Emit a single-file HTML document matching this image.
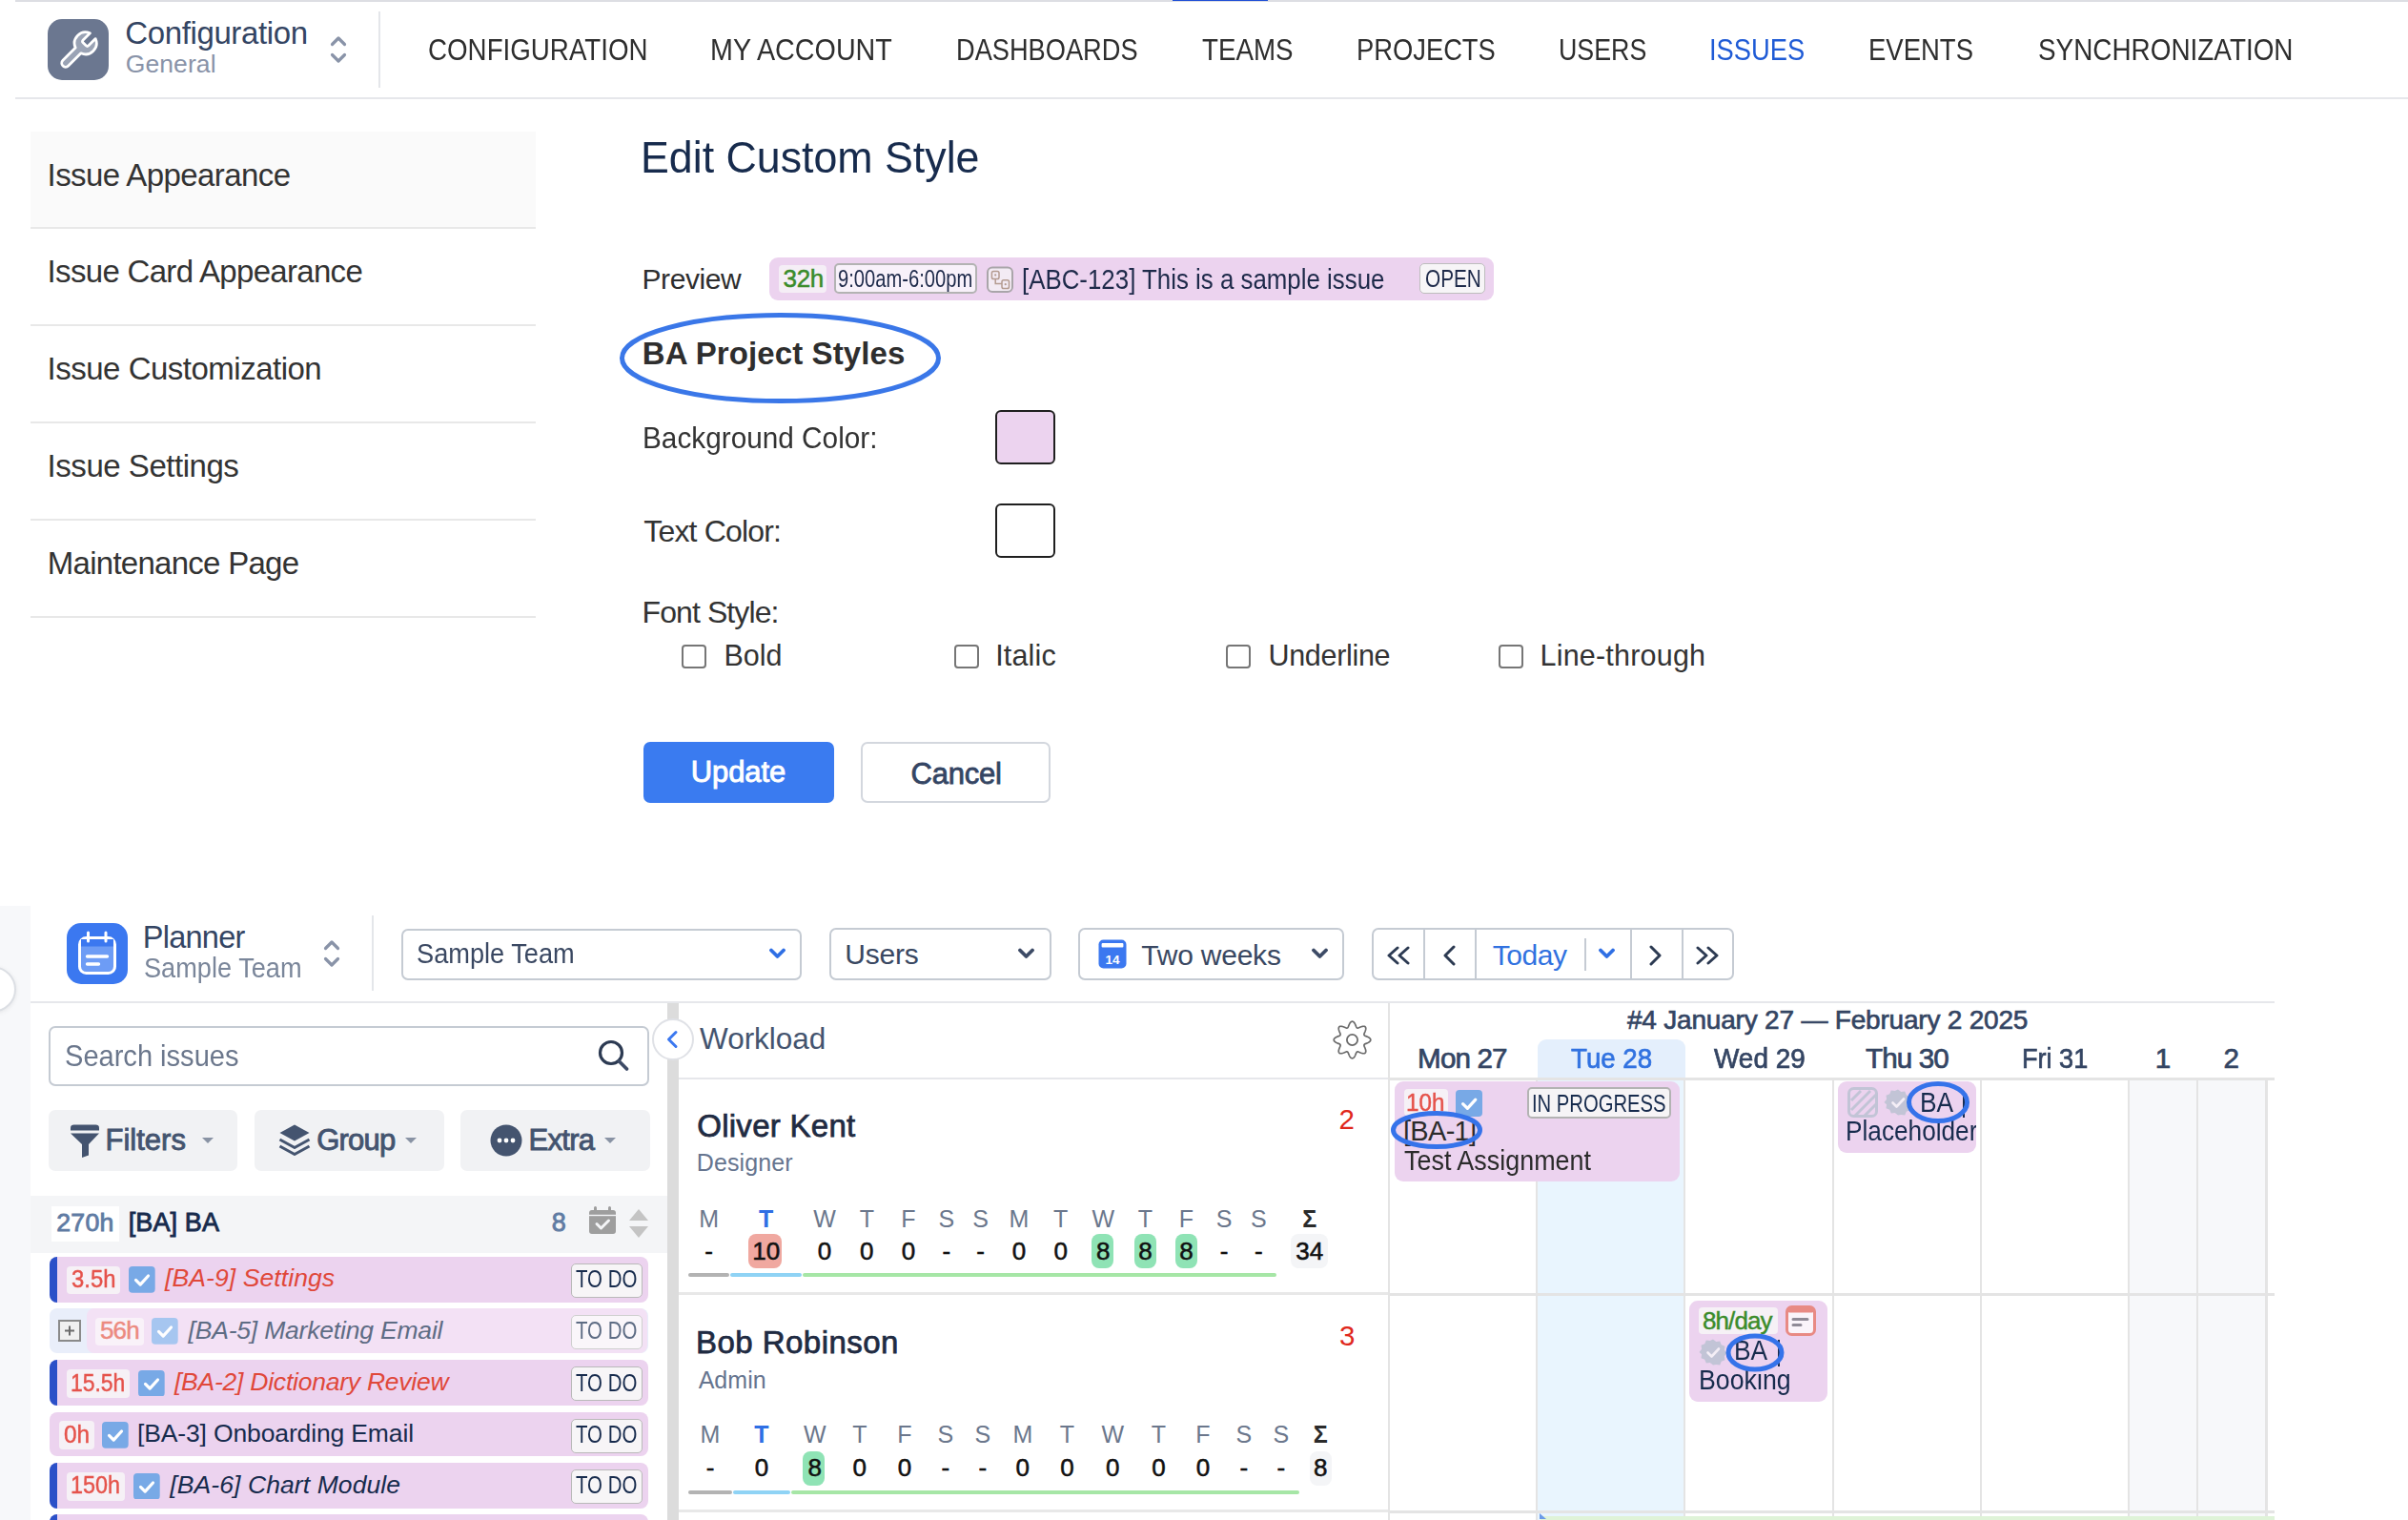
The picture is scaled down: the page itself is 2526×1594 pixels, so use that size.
<!DOCTYPE html>
<html><head><meta charset="utf-8"><style>
html,body{margin:0;padding:0;background:#fff;}
body{width:2526px;height:1594px;overflow:hidden;position:relative;font-family:"Liberation Sans",sans-serif;}
.t{position:absolute;white-space:pre;}
.b{position:absolute;}
</style></head><body>
<div class="b" style="left:16.00px;top:0.00px;width:2510.00px;height:2.00px;background:#dddee3;"></div>
<div class="b" style="left:1230.00px;top:0.00px;width:100.00px;height:1.20px;background:#1f50d6;"></div>
<div class="b" style="left:16.00px;top:102.00px;width:2510.00px;height:2.00px;background:#e6e7eb;"></div>
<div class="b" style="left:50.00px;top:20.00px;width:64.00px;height:64.00px;background:#6b7790;border-radius:15px;"></div>
<svg class="b" style="left:58.50px;top:29.50px;" width="46.00" height="46.00" viewBox="0 0 24 24"><path d="M14.7 6.3a1 1 0 0 0 0 1.4l1.6 1.6a1 1 0 0 0 1.4 0l3.77-3.77a6 6 0 0 1-7.94 7.94l-6.91 6.91a2.12 2.12 0 0 1-3-3l6.91-6.91a6 6 0 0 1 7.94-7.94l-3.76 3.76z" fill="#9aa3b5" stroke="#fff" stroke-width="1.45" stroke-linecap="round" stroke-linejoin="round"/></svg>
<div class="t" style="left:131.25px;top:17.65px;font-size:33px;line-height:33px;color:#344563;letter-spacing:-0.375px;">Configuration</div>
<div class="t" style="left:131.75px;top:54.27px;font-size:26.5px;line-height:26.5px;color:#8993a8;letter-spacing:0.083px;">General</div>
<svg class="b" style="left:345.00px;top:36.00px;" width="20.00" height="32.00" viewBox="0 0 20 32"><path d="M3.5 10.5L10 4l6.5 6.5M3.5 21.5L10 28l6.5-6.5" fill="none" stroke="#8993a8" stroke-width="3.2" stroke-linecap="round" stroke-linejoin="round"/></svg>
<div class="b" style="left:397.00px;top:12.00px;width:2.00px;height:80.00px;background:#e4e6ea;"></div>
<div class="t" style="left:448.66px;top:37.15px;font-size:31px;line-height:31px;color:#2e2e2e;transform:scaleX(0.8946);transform-origin:0 0;">CONFIGURATION</div>
<div class="t" style="left:744.68px;top:37.15px;font-size:31px;line-height:31px;color:#2e2e2e;transform:scaleX(0.9261);transform-origin:0 0;">MY ACCOUNT</div>
<div class="t" style="left:1002.81px;top:37.15px;font-size:31px;line-height:31px;color:#2e2e2e;transform:scaleX(0.8779);transform-origin:0 0;">DASHBOARDS</div>
<div class="t" style="left:1261.33px;top:37.15px;font-size:31px;line-height:31px;color:#2e2e2e;transform:scaleX(0.8947);transform-origin:0 0;">TEAMS</div>
<div class="t" style="left:1422.80px;top:37.15px;font-size:31px;line-height:31px;color:#2e2e2e;transform:scaleX(0.8817);transform-origin:0 0;">PROJECTS</div>
<div class="t" style="left:1634.56px;top:37.15px;font-size:31px;line-height:31px;color:#2e2e2e;transform:scaleX(0.8639);transform-origin:0 0;">USERS</div>
<div class="t" style="left:1792.97px;top:37.15px;font-size:31px;line-height:31px;color:#1f5bd6;transform:scaleX(0.8822);transform-origin:0 0;">ISSUES</div>
<div class="t" style="left:1960.18px;top:37.15px;font-size:31px;line-height:31px;color:#2e2e2e;transform:scaleX(0.8867);transform-origin:0 0;">EVENTS</div>
<div class="t" style="left:2137.65px;top:37.15px;font-size:31px;line-height:31px;color:#2e2e2e;transform:scaleX(0.8995);transform-origin:0 0;">SYNCHRONIZATION</div>
<div class="b" style="left:32.00px;top:138.00px;width:530.00px;height:100.00px;background:#fafafa;"></div>
<div class="b" style="left:32.00px;top:238.00px;width:530.00px;height:2.00px;background:#e8e8e8;"></div>
<div class="b" style="left:32.00px;top:340.00px;width:530.00px;height:2.00px;background:#e8e8e8;"></div>
<div class="b" style="left:32.00px;top:442.00px;width:530.00px;height:2.00px;background:#e8e8e8;"></div>
<div class="b" style="left:32.00px;top:544.00px;width:530.00px;height:2.00px;background:#e8e8e8;"></div>
<div class="b" style="left:32.00px;top:646.00px;width:530.00px;height:2.00px;background:#e8e8e8;"></div>
<div class="t" style="left:49.60px;top:166.55px;font-size:33px;line-height:33px;color:#333333;letter-spacing:-0.583px;">Issue Appearance</div>
<div class="t" style="left:49.60px;top:268.45px;font-size:33px;line-height:33px;color:#333333;letter-spacing:-0.685px;">Issue Card Appearance</div>
<div class="t" style="left:49.60px;top:369.95px;font-size:33px;line-height:33px;color:#333333;letter-spacing:-0.500px;">Issue Customization</div>
<div class="t" style="left:49.60px;top:471.95px;font-size:33px;line-height:33px;color:#333333;letter-spacing:-0.462px;">Issue Settings</div>
<div class="t" style="left:49.85px;top:573.95px;font-size:33px;line-height:33px;color:#333333;letter-spacing:-0.733px;">Maintenance Page</div>
<div class="t" style="left:672.43px;top:140.65px;font-size:47px;line-height:47px;color:#172b4d;transform:scaleX(0.9517);transform-origin:0 0;">Edit Custom Style</div>
<div class="t" style="left:673.50px;top:277.90px;font-size:30px;line-height:30px;color:#2e2e2e;letter-spacing:-0.425px;">Preview</div>
<div class="b" style="left:807.00px;top:269.50px;width:760.00px;height:45.00px;background:#ecd3ef;border-radius:9px;"></div>
<div class="b" style="left:817.00px;top:278.00px;width:50.00px;height:28.60px;background:#f5eef6;border-radius:4px;"></div>
<div class="t" style="left:821.60px;top:279.30px;font-size:26px;line-height:26px;color:#3b8c2b;letter-spacing:-0.375px;-webkit-text-stroke:0.5px #3b8c2b;">32h</div>
<div class="b" style="left:875.00px;top:276.00px;width:150.00px;height:32.00px;background:#f8f1fa;border:2px solid #b3b3b3;border-radius:5px;box-sizing:border-box;"></div>
<div class="t" style="left:879.43px;top:279.30px;font-size:26px;line-height:26px;color:#1e2a4a;transform:scaleX(0.7755);transform-origin:0 0;">9:00am-6:00pm</div>
<svg class="b" style="left:1034.00px;top:278.00px;" width="30.00" height="30.00" viewBox="0 0 30 30"><rect x="2" y="2.4" width="26" height="25.5" rx="5" fill="#f3ebf4" stroke="#a9a5a9" stroke-width="2"/><rect x="6.4" y="6.4" width="7.6" height="8.1" rx="1.8" fill="none" stroke="#b49b90" stroke-width="1.5"/><circle cx="10.2" cy="10.45" r="1.1" fill="#b49b90"/><rect x="17" y="15.8" width="7.5" height="8.7" rx="1.8" fill="none" stroke="#b49b90" stroke-width="1.5"/><circle cx="20.75" cy="20.15" r="1.1" fill="#b49b90"/><path d="M10.2 14.5V19.5H17" fill="none" stroke="#b49b90" stroke-width="1.5"/></svg>
<div class="t" style="left:1072.28px;top:277.90px;font-size:30px;line-height:30px;color:#1e2a4a;transform:scaleX(0.8621);transform-origin:0 0;">[ABC-123] This is a sample issue</div>
<div class="b" style="left:1489.00px;top:276.00px;width:69.00px;height:32.00px;background:#f7f5f7;border:1.5px solid #bdbdbd;border-radius:5px;box-sizing:border-box;"></div>
<div class="t" style="left:1495.00px;top:279.30px;font-size:26px;line-height:26px;color:#1e2a4a;transform:scaleX(0.7986);transform-origin:0 0;">OPEN</div>
<div class="t" style="left:673.75px;top:353.95px;font-size:33px;line-height:33px;color:#2e2e2e;font-weight:700;letter-spacing:0.109px;">BA Project Styles</div>
<svg class="b" style="left:645.00px;top:325.00px;" width="350.00" height="104.00" viewBox="0 0 350 104"><ellipse cx="173.5" cy="50.5" rx="166" ry="45" fill="none" stroke="#3a77e8" stroke-width="5"/></svg>
<div class="t" style="left:673.67px;top:442.60px;font-size:32px;line-height:32px;color:#333333;transform:scaleX(0.9301);transform-origin:0 0;">Background Color:</div>
<div class="b" style="left:1043.60px;top:430.00px;width:63.00px;height:57.00px;background:#ecd3ef;border:2px solid #1f1f1f;border-radius:6px;box-sizing:border-box;"></div>
<div class="t" style="left:675.25px;top:540.80px;font-size:32px;line-height:32px;color:#333333;letter-spacing:-0.825px;">Text Color:</div>
<div class="b" style="left:1043.60px;top:528.00px;width:63.00px;height:57.00px;background:#ffffff;border:2px solid #1f1f1f;border-radius:6px;box-sizing:border-box;"></div>
<div class="t" style="left:673.50px;top:625.80px;font-size:32px;line-height:32px;color:#333333;letter-spacing:-0.900px;">Font Style:</div>
<div class="b" style="left:715.00px;top:675.60px;width:26.00px;height:25.00px;background:#fff;border:2px solid #767676;border-radius:4px;box-sizing:border-box;"></div>
<div class="t" style="left:759.50px;top:671.68px;font-size:30.5px;line-height:30.5px;color:#333333;letter-spacing:-0.067px;">Bold</div>
<div class="b" style="left:1001.00px;top:675.60px;width:26.00px;height:25.00px;background:#fff;border:2px solid #767676;border-radius:4px;box-sizing:border-box;"></div>
<div class="t" style="left:1044.25px;top:671.68px;font-size:30.5px;line-height:30.5px;color:#333333;letter-spacing:0.150px;">Italic</div>
<div class="b" style="left:1286.00px;top:675.60px;width:26.00px;height:25.00px;background:#fff;border:2px solid #767676;border-radius:4px;box-sizing:border-box;"></div>
<div class="t" style="left:1330.45px;top:671.68px;font-size:30.5px;line-height:30.5px;color:#333333;letter-spacing:-0.300px;">Underline</div>
<div class="b" style="left:1572.00px;top:675.60px;width:26.00px;height:25.00px;background:#fff;border:2px solid #767676;border-radius:4px;box-sizing:border-box;"></div>
<div class="t" style="left:1615.50px;top:671.68px;font-size:30.5px;line-height:30.5px;color:#333333;letter-spacing:0.205px;">Line-through</div>
<div class="b" style="left:675.00px;top:778.00px;width:200.00px;height:64.00px;background:#3a7bf0;border-radius:7px;"></div>
<div class="t" style="left:724.75px;top:793.65px;font-size:31px;line-height:31px;color:#ffffff;letter-spacing:-0.100px;-webkit-text-stroke:0.9px #ffffff;">Update</div>
<div class="b" style="left:903.00px;top:778.00px;width:199.00px;height:64.00px;background:#fff;border:2px solid #d3d7de;border-radius:7px;box-sizing:border-box;"></div>
<div class="t" style="left:955.50px;top:796.25px;font-size:31px;line-height:31px;color:#344563;letter-spacing:-0.230px;-webkit-text-stroke:0.8px #344563;">Cancel</div>
<div class="b" style="left:0.00px;top:950.00px;width:32.00px;height:644.00px;background:#f7f8fa;"></div>
<svg class="b" style="left:-40.00px;top:1005.00px;filter:drop-shadow(0 1px 2px rgba(0,0,0,.08));" width="70.00" height="70.00" viewBox="0 0 70 70"><circle cx="33" cy="32.5" r="23" fill="#fff" stroke="#dcdfe4" stroke-width="2"/></svg>
<div class="b" style="left:70.00px;top:968.00px;width:64.00px;height:64.00px;background:#3b78f0;border-radius:15px;"></div>
<svg class="b" style="left:70.00px;top:968.00px;" width="64.00" height="64.00" viewBox="0 0 64 64"><rect x="13.5" y="15.5" width="37" height="37" rx="7" fill="#6d9cf5" stroke="#fff" stroke-width="3"/><path d="M15 17h34v7.5H15z" fill="#3b78f0"/><path d="M22.5 10v9M41 10v9" stroke="#fff" stroke-width="3" stroke-linecap="round"/><path d="M21.5 35h21M21.5 43h12" stroke="#fff" stroke-width="3.4" stroke-linecap="round"/></svg>
<div class="t" style="left:149.75px;top:966.58px;font-size:32.5px;line-height:32.5px;color:#344563;letter-spacing:-0.742px;">Planner</div>
<div class="t" style="left:151.33px;top:1000.55px;font-size:29px;line-height:29px;color:#7a869a;transform:scaleX(0.9366);transform-origin:0 0;">Sample Team</div>
<svg class="b" style="left:338.00px;top:984.00px;" width="20.00" height="32.00" viewBox="0 0 20 32"><path d="M3.5 10.5L10 4l6.5 6.5M3.5 21.5L10 28l6.5-6.5" fill="none" stroke="#8993a8" stroke-width="3.2" stroke-linecap="round" stroke-linejoin="round"/></svg>
<div class="b" style="left:390.00px;top:960.00px;width:2.00px;height:79.00px;background:#e4e6ea;"></div>
<div class="b" style="left:32.00px;top:1050.00px;width:2354.00px;height:2.00px;background:#e6e7eb;"></div>
<div class="b" style="left:420.50px;top:973.60px;width:420.50px;height:54.60px;background:#fff;border:2px solid #c5cbd3;border-radius:7px;box-sizing:border-box;"></div>
<div class="t" style="left:436.83px;top:985.65px;font-size:29px;line-height:29px;color:#3a4862;transform:scaleX(0.9372);transform-origin:0 0;">Sample Team</div>
<svg class="b" style="left:807.00px;top:994.00px;" width="17.00" height="12.00" viewBox="0 0 17 12"><path d="M2 2.5l6.5 6.5L15 2.5" fill="none" stroke="#2f6fe4" stroke-width="3.8" stroke-linecap="round" stroke-linejoin="round"/></svg>
<div class="b" style="left:869.60px;top:973.30px;width:233.00px;height:55.00px;background:#fff;border:2px solid #c5cbd3;border-radius:7px;box-sizing:border-box;"></div>
<div class="t" style="left:886.35px;top:985.90px;font-size:30px;line-height:30px;color:#3a4862;letter-spacing:-0.250px;">Users</div>
<svg class="b" style="left:1068.00px;top:994.00px;" width="17.00" height="12.00" viewBox="0 0 17 12"><path d="M2 2.5l6.5 6.5L15 2.5" fill="none" stroke="#3d4b66" stroke-width="3.8" stroke-linecap="round" stroke-linejoin="round"/></svg>
<div class="b" style="left:1131.30px;top:973.30px;width:278.70px;height:55.00px;background:#fff;border:2px solid #c5cbd3;border-radius:7px;box-sizing:border-box;"></div>
<svg class="b" style="left:1152.00px;top:985.00px;" width="30.00" height="31.00" viewBox="0 0 30 31"><rect x="0.5" y="0.5" width="29" height="30" rx="5" fill="#3b78f0"/><rect x="3.6" y="4" width="22.8" height="4.4" rx="1" fill="#fff"/><text x="15" y="26" font-size="13.5" font-family="Liberation Sans" font-weight="700" fill="#fff" text-anchor="middle">14</text></svg>
<div class="t" style="left:1197.25px;top:987.20px;font-size:30px;line-height:30px;color:#3a4862;letter-spacing:-0.219px;">Two weeks</div>
<svg class="b" style="left:1376.00px;top:994.00px;" width="17.00" height="12.00" viewBox="0 0 17 12"><path d="M2 2.5l6.5 6.5L15 2.5" fill="none" stroke="#3d4b66" stroke-width="3.8" stroke-linecap="round" stroke-linejoin="round"/></svg>
<div class="b" style="left:1439.30px;top:973.30px;width:379.50px;height:55.00px;background:#fff;border:2px solid #c5cbd3;border-radius:7px;box-sizing:border-box;"></div>
<div class="b" style="left:1492.50px;top:975.00px;width:2.00px;height:51.00px;background:#c5cbd3;"></div>
<div class="b" style="left:1546.70px;top:975.00px;width:2.00px;height:51.00px;background:#c5cbd3;"></div>
<div class="b" style="left:1709.80px;top:975.00px;width:2.00px;height:51.00px;background:#c5cbd3;"></div>
<div class="b" style="left:1763.60px;top:975.00px;width:2.00px;height:51.00px;background:#c5cbd3;"></div>
<div class="b" style="left:1662.00px;top:984.00px;width:2.00px;height:34.00px;background:#c5cbd3;"></div>
<svg class="b" style="left:1452.00px;top:992.00px;" width="30.00" height="20.00" viewBox="0 0 30 20"><path d="M14 2L5 10l9 8M25 2l-9 8 9 8" fill="none" stroke="#2c3a52" stroke-width="3" stroke-linecap="round" stroke-linejoin="round"/></svg>
<svg class="b" style="left:1510.00px;top:991.00px;" width="22.00" height="22.00" viewBox="0 0 22 22"><path d="M15 2L6 11l9 9" fill="none" stroke="#2c3a52" stroke-width="3" stroke-linecap="round" stroke-linejoin="round"/></svg>
<div class="t" style="left:1565.65px;top:987.00px;font-size:30px;line-height:30px;color:#3172e0;letter-spacing:-0.438px;">Today</div>
<svg class="b" style="left:1677.00px;top:994.00px;" width="17.00" height="12.00" viewBox="0 0 17 12"><path d="M2 2.5l6.5 6.5L15 2.5" fill="none" stroke="#2f6fe4" stroke-width="3.8" stroke-linecap="round" stroke-linejoin="round"/></svg>
<svg class="b" style="left:1726.00px;top:991.00px;" width="22.00" height="22.00" viewBox="0 0 22 22"><path d="M6 2l9 9-9 9" fill="none" stroke="#2c3a52" stroke-width="3" stroke-linecap="round" stroke-linejoin="round"/></svg>
<svg class="b" style="left:1776.00px;top:992.00px;" width="30.00" height="20.00" viewBox="0 0 30 20"><path d="M5 2l9 8-9 8M16 2l9 8-9 8" fill="none" stroke="#2c3a52" stroke-width="3" stroke-linecap="round" stroke-linejoin="round"/></svg>
<div class="b" style="left:700.00px;top:1052.00px;width:12.00px;height:542.00px;background:#dcdcdc;"></div>
<div class="b" style="left:50.50px;top:1076.40px;width:630.50px;height:62.40px;background:#fff;border:2px solid #c5cbd3;border-radius:7px;box-sizing:border-box;"></div>
<div class="t" style="left:67.64px;top:1091.40px;font-size:32px;line-height:32px;color:#6b778c;transform:scaleX(0.9079);transform-origin:0 0;">Search issues</div>
<svg class="b" style="left:626.00px;top:1089.00px;" width="36.00" height="37.00" viewBox="0 0 36 37"><circle cx="15" cy="15" r="11.5" fill="none" stroke="#2c3a52" stroke-width="3.2"/><path d="M23.5 24l8 8" stroke="#3d4b66" stroke-width="3.8" stroke-linecap="round"/></svg>
<div class="b" style="left:50.50px;top:1164.00px;width:198.00px;height:64.00px;background:#f1f2f4;border-radius:7px;"></div>
<div class="b" style="left:267.00px;top:1164.00px;width:198.70px;height:64.00px;background:#f1f2f4;border-radius:7px;"></div>
<div class="b" style="left:483.00px;top:1164.00px;width:199.00px;height:64.00px;background:#f1f2f4;border-radius:7px;"></div>
<svg class="b" style="left:72.00px;top:1178.00px;" width="34.00" height="36.00" viewBox="0 0 34 36"><path d="M2 4.5C2 2.5 3.5 1.5 5.5 1.5h23c2 0 3.5 1 3.5 3v3H2z" fill="#44546f"/><path d="M2 10.5h30L21 22v11.5l-7 2.5V22z" fill="#44546f"/></svg>
<div class="t" style="left:110.50px;top:1179.65px;font-size:31px;line-height:31px;color:#44546f;letter-spacing:0.000px;-webkit-text-stroke:0.9px #44546f;">Filters</div>
<svg class="b" style="left:211.00px;top:1192.00px;" width="14.00" height="8.00" viewBox="0 0 14 8"><path d="M1 1h12L7 7z" fill="#8993a4"/></svg>
<svg class="b" style="left:291.00px;top:1178.00px;" width="36.00" height="36.00" viewBox="0 0 36 36"><path d="M18 1.5L2.5 10 18 18.5 33.5 10z" fill="#44546f"/><path d="M2.5 17L18 25.5 33.5 17" fill="none" stroke="#44546f" stroke-width="3" stroke-linejoin="round"/><path d="M2.5 24L18 32.5 33.5 24" fill="none" stroke="#44546f" stroke-width="3" stroke-linejoin="round"/></svg>
<div class="t" style="left:332.30px;top:1179.65px;font-size:31px;line-height:31px;color:#44546f;letter-spacing:-0.825px;-webkit-text-stroke:0.9px #44546f;">Group</div>
<svg class="b" style="left:424.00px;top:1192.00px;" width="14.00" height="8.00" viewBox="0 0 14 8"><path d="M1 1h12L7 7z" fill="#8993a4"/></svg>
<svg class="b" style="left:514.00px;top:1178.00px;" width="36.00" height="36.00" viewBox="0 0 36 36"><circle cx="17" cy="18" r="16.5" fill="#44546f"/><circle cx="10" cy="18" r="2.4" fill="#fff"/><circle cx="17" cy="18" r="2.4" fill="#fff"/><circle cx="24" cy="18" r="2.4" fill="#fff"/></svg>
<div class="t" style="left:554.50px;top:1179.65px;font-size:31px;line-height:31px;color:#44546f;letter-spacing:-0.688px;-webkit-text-stroke:0.9px #44546f;">Extra</div>
<svg class="b" style="left:633.00px;top:1192.00px;" width="14.00" height="8.00" viewBox="0 0 14 8"><path d="M1 1h12L7 7z" fill="#8993a4"/></svg>
<div class="b" style="left:32.00px;top:1254.00px;width:668.00px;height:60.00px;background:#f4f5f7;"></div>
<div class="b" style="left:54.00px;top:1265.00px;width:71.00px;height:37.00px;background:#ffffff;"></div>
<div class="t" style="left:59.25px;top:1269.01px;font-size:26.7px;line-height:26.7px;color:#5f7ba3;letter-spacing:0.250px;-webkit-text-stroke:0.85px #5f7ba3;">270h</div>
<div class="t" style="left:134.70px;top:1268.75px;font-size:27px;line-height:27px;color:#172b4d;letter-spacing:0.133px;-webkit-text-stroke:0.85px #172b4d;">[BA] BA</div>
<div class="t" style="left:578.75px;top:1268.75px;font-size:27px;line-height:27px;color:#5f7ba3;-webkit-text-stroke:0.85px #5f7ba3;">8</div>
<svg class="b" style="left:617.00px;top:1265.00px;" width="30.00" height="30.00" viewBox="0 0 30 30"><rect x="1" y="4" width="28" height="25" rx="3" fill="#9e9e9e"/><path d="M7.5 1.5v5M22.5 1.5v5" stroke="#9e9e9e" stroke-width="3" stroke-linecap="round"/><path d="M1 9.5h28" stroke="#f4f5f7" stroke-width="1.4"/><path d="M9 18.5l4.5 4.5 8-8" fill="none" stroke="#f4f5f7" stroke-width="3" stroke-linecap="round" stroke-linejoin="round"/></svg>
<svg class="b" style="left:659.00px;top:1267.00px;" width="22.00" height="32.00" viewBox="0 0 22 32"><path d="M11 1L21 13H1z" fill="#c4c4c4"/><path d="M11 31L21 19H1z" fill="#c4c4c4"/></svg>
<div class="b" style="left:52.00px;top:1317.70px;width:627.50px;height:48.00px;background:#ecd3ef;border-radius:8px;"></div>
<div class="b" style="left:52.00px;top:1317.70px;width:8.00px;height:48.00px;background:#2b50c8;border-radius:8px 0 0 8px;"></div>
<div class="b" style="left:70.00px;top:1327.50px;width:56.00px;height:29.70px;background:#f6f1f6;border-radius:4px;"></div>
<div class="t" style="left:75.08px;top:1327.80px;font-size:26px;line-height:26px;color:#e5534b;transform:scaleX(0.9167);transform-origin:0 0;-webkit-text-stroke:0.45px #e5534b;">3.5h</div>
<svg class="b" style="left:135.00px;top:1328.00px;opacity:1;" width="27.70" height="27.70" viewBox="0 0 27.7 27.7"><rect x="0" y="0" width="27.7" height="27.7" rx="4" fill="#78a9e6"/><path d="M7.5 14.4l4.7 4.7 8.3-9.1" fill="none" stroke="#fff" stroke-width="3.2" stroke-linecap="round" stroke-linejoin="round"/></svg>
<div class="t" style="left:173.10px;top:1327.38px;font-size:26.5px;line-height:26.5px;color:#e0483a;font-style:italic;letter-spacing:0.089px;">[BA-9] Settings</div>
<div class="b" style="left:598.50px;top:1324.70px;width:75.00px;height:36.00px;background:#f7f5f7;border:1.6px solid #b9b9b9;border-radius:5px;box-sizing:border-box;"></div>
<div class="t" style="left:604.11px;top:1327.80px;font-size:26px;line-height:26px;color:#172b4d;transform:scaleX(0.7850);transform-origin:0 0;">TO DO</div>
<div class="b" style="left:52.00px;top:1426.40px;width:627.50px;height:47.40px;background:#ecd3ef;border-radius:8px;"></div>
<div class="b" style="left:52.00px;top:1426.40px;width:8.00px;height:47.40px;background:#2b50c8;border-radius:8px 0 0 8px;"></div>
<div class="b" style="left:70.00px;top:1436.20px;width:66.00px;height:29.70px;background:#f6f1f6;border-radius:4px;"></div>
<div class="t" style="left:74.24px;top:1436.50px;font-size:26px;line-height:26px;color:#e5534b;transform:scaleX(0.8816);transform-origin:0 0;-webkit-text-stroke:0.45px #e5534b;">15.5h</div>
<svg class="b" style="left:145.20px;top:1436.70px;opacity:1;" width="27.70" height="27.70" viewBox="0 0 27.7 27.7"><rect x="0" y="0" width="27.7" height="27.7" rx="4" fill="#78a9e6"/><path d="M7.5 14.4l4.7 4.7 8.3-9.1" fill="none" stroke="#fff" stroke-width="3.2" stroke-linecap="round" stroke-linejoin="round"/></svg>
<div class="t" style="left:183.00px;top:1436.08px;font-size:26.5px;line-height:26.5px;color:#e0483a;font-style:italic;letter-spacing:-0.239px;">[BA-2] Dictionary Review</div>
<div class="b" style="left:598.50px;top:1433.40px;width:75.00px;height:36.00px;background:#f7f5f7;border:1.6px solid #b9b9b9;border-radius:5px;box-sizing:border-box;"></div>
<div class="t" style="left:604.11px;top:1436.50px;font-size:26px;line-height:26px;color:#172b4d;transform:scaleX(0.7850);transform-origin:0 0;">TO DO</div>
<div class="b" style="left:52.00px;top:1480.60px;width:627.50px;height:46.90px;background:#ecd3ef;border-radius:8px;"></div>
<div class="b" style="left:62.00px;top:1490.40px;width:36.60px;height:29.70px;background:#f6f1f6;border-radius:4px;"></div>
<div class="t" style="left:67.06px;top:1490.70px;font-size:26px;line-height:26px;color:#e5534b;transform:scaleX(0.9371);transform-origin:0 0;-webkit-text-stroke:0.45px #e5534b;">0h</div>
<svg class="b" style="left:107.00px;top:1490.90px;opacity:1;" width="27.70" height="27.70" viewBox="0 0 27.7 27.7"><rect x="0" y="0" width="27.7" height="27.7" rx="4" fill="#78a9e6"/><path d="M7.5 14.4l4.7 4.7 8.3-9.1" fill="none" stroke="#fff" stroke-width="3.2" stroke-linecap="round" stroke-linejoin="round"/></svg>
<div class="t" style="left:144.05px;top:1490.27px;font-size:26.5px;line-height:26.5px;color:#172b4d;letter-spacing:-0.143px;">[BA-3] Onboarding Email</div>
<div class="b" style="left:598.50px;top:1487.60px;width:75.00px;height:36.00px;background:#f7f5f7;border:1.6px solid #b9b9b9;border-radius:5px;box-sizing:border-box;"></div>
<div class="t" style="left:604.11px;top:1490.70px;font-size:26px;line-height:26px;color:#172b4d;transform:scaleX(0.7850);transform-origin:0 0;">TO DO</div>
<div class="b" style="left:52.00px;top:1534.30px;width:627.50px;height:47.40px;background:#ecd3ef;border-radius:8px;"></div>
<div class="b" style="left:52.00px;top:1534.30px;width:8.00px;height:47.40px;background:#2b50c8;border-radius:8px 0 0 8px;"></div>
<div class="b" style="left:70.00px;top:1544.10px;width:60.80px;height:29.70px;background:#f6f1f6;border-radius:4px;"></div>
<div class="t" style="left:74.20px;top:1544.40px;font-size:26px;line-height:26px;color:#e5534b;transform:scaleX(0.8995);transform-origin:0 0;-webkit-text-stroke:0.45px #e5534b;">150h</div>
<svg class="b" style="left:140.00px;top:1544.60px;opacity:1;" width="27.70" height="27.70" viewBox="0 0 27.7 27.7"><rect x="0" y="0" width="27.7" height="27.7" rx="4" fill="#78a9e6"/><path d="M7.5 14.4l4.7 4.7 8.3-9.1" fill="none" stroke="#fff" stroke-width="3.2" stroke-linecap="round" stroke-linejoin="round"/></svg>
<div class="t" style="left:178.20px;top:1543.97px;font-size:26.5px;line-height:26.5px;color:#172b4d;font-style:italic;letter-spacing:0.100px;">[BA-6] Chart Module</div>
<div class="b" style="left:598.50px;top:1541.30px;width:75.00px;height:36.00px;background:#f7f5f7;border:1.6px solid #b9b9b9;border-radius:5px;box-sizing:border-box;"></div>
<div class="t" style="left:604.11px;top:1544.40px;font-size:26px;line-height:26px;color:#172b4d;transform:scaleX(0.7850);transform-origin:0 0;">TO DO</div>
<div class="b" style="left:52.00px;top:1371.90px;width:627.50px;height:47.40px;background:#e9eefa;border-radius:8px;"></div>
<div class="b" style="left:90.70px;top:1371.90px;width:588.80px;height:47.40px;background:#f3e1f5;border-radius:8px;"></div>
<svg class="b" style="left:61.00px;top:1384.00px;" width="24.00" height="23.00" viewBox="0 0 24 23"><rect x="1" y="1" width="22" height="21" fill="#f0f0f0" stroke="#8a8a8a" stroke-width="2"/><path d="M12 6.5v10M7 11.5h10" stroke="#6b6b6b" stroke-width="2"/></svg>
<div class="b" style="left:100.00px;top:1381.70px;width:51.00px;height:29.70px;background:#f9f2f9;border-radius:4px;"></div>
<div class="t" style="left:105.00px;top:1382.00px;font-size:26px;line-height:26px;color:#ec8a80;letter-spacing:-0.875px;-webkit-text-stroke:0.45px #ec8a80;">56h</div>
<svg class="b" style="left:159.00px;top:1382.20px;opacity:1;" width="27.70" height="27.70" viewBox="0 0 27.7 27.7"><rect x="0" y="0" width="27.7" height="27.7" rx="4" fill="#a6c6f0"/><path d="M7.5 14.4l4.7 4.7 8.3-9.1" fill="none" stroke="#fff" stroke-width="3.2" stroke-linecap="round" stroke-linejoin="round"/></svg>
<div class="t" style="left:197.50px;top:1381.58px;font-size:26.5px;line-height:26.5px;color:#5e6c84;font-style:italic;letter-spacing:-0.190px;">[BA-5] Marketing Email</div>
<div class="b" style="left:598.50px;top:1378.90px;width:75.00px;height:36.00px;background:#faf6fa;border:1.6px solid #cfcfcf;border-radius:5px;box-sizing:border-box;"></div>
<div class="t" style="left:604.11px;top:1381.80px;font-size:26px;line-height:26px;color:#5e6c84;transform:scaleX(0.7850);transform-origin:0 0;">TO DO</div>
<div class="b" style="left:52.00px;top:1588.00px;width:627.50px;height:30.00px;background:#ecd3ef;border-radius:8px;"></div>
<div class="b" style="left:52.00px;top:1588.00px;width:8.00px;height:30.00px;background:#2b50c8;border-radius:8px 0 0 0;"></div>
<div class="b" style="left:712.00px;top:1129.50px;width:1674.00px;height:2.00px;background:#e6e7eb;"></div>
<svg class="b" style="left:683.00px;top:1067.00px;" width="46.00" height="46.00" viewBox="0 0 46 46"><circle cx="23" cy="23" r="21" fill="#fff" stroke="#dfe1e6" stroke-width="2"/><path d="M26 15.5l-7.5 7.5 7.5 7.5" fill="none" stroke="#3b78f0" stroke-width="3" stroke-linecap="round" stroke-linejoin="round"/></svg>
<div class="t" style="left:734.05px;top:1074.02px;font-size:31.5px;line-height:31.5px;color:#44546f;letter-spacing:-0.036px;">Workload</div>
<svg class="b" style="left:1396.50px;top:1068.50px;" width="43.00" height="43.00" viewBox="0 0 43 43"><path d="M40.80,21.50 L40.73,22.00 L40.52,22.50 L40.19,22.97 L39.74,23.42 L39.20,23.83 L38.58,24.21 L37.92,24.54 L37.25,24.85 L36.58,25.12 L35.94,25.37 L35.36,25.61 L34.87,25.84 L34.46,26.09 L34.16,26.36 L33.97,26.67 L33.89,27.02 L33.91,27.42 L34.02,27.88 L34.21,28.40 L34.45,28.97 L34.72,29.60 L35.00,30.27 L35.27,30.96 L35.49,31.67 L35.66,32.37 L35.75,33.04 L35.75,33.67 L35.66,34.25 L35.45,34.74 L35.15,35.15 L34.74,35.45 L34.25,35.66 L33.67,35.75 L33.04,35.75 L32.37,35.66 L31.67,35.49 L30.96,35.27 L30.27,35.00 L29.60,34.72 L28.98,34.45 L28.40,34.21 L27.88,34.02 L27.42,33.91 L27.02,33.89 L26.67,33.97 L26.36,34.16 L26.09,34.46 L25.84,34.87 L25.61,35.36 L25.37,35.94 L25.12,36.58 L24.85,37.25 L24.54,37.92 L24.21,38.58 L23.83,39.20 L23.42,39.74 L22.97,40.19 L22.50,40.52 L22.00,40.73 L21.50,40.80 L21.00,40.73 L20.50,40.52 L20.03,40.19 L19.58,39.74 L19.17,39.20 L18.79,38.58 L18.46,37.92 L18.15,37.25 L17.88,36.58 L17.63,35.94 L17.39,35.36 L17.16,34.87 L16.91,34.46 L16.64,34.16 L16.33,33.97 L15.98,33.89 L15.58,33.91 L15.12,34.02 L14.60,34.21 L14.03,34.45 L13.40,34.72 L12.73,35.00 L12.04,35.27 L11.33,35.49 L10.63,35.66 L9.96,35.75 L9.33,35.75 L8.75,35.66 L8.26,35.45 L7.85,35.15 L7.55,34.74 L7.34,34.25 L7.25,33.67 L7.25,33.04 L7.34,32.37 L7.51,31.67 L7.73,30.96 L8.00,30.27 L8.28,29.60 L8.55,28.97 L8.79,28.40 L8.98,27.88 L9.09,27.42 L9.11,27.02 L9.03,26.67 L8.84,26.36 L8.54,26.09 L8.13,25.84 L7.64,25.61 L7.06,25.37 L6.42,25.12 L5.75,24.85 L5.08,24.54 L4.42,24.21 L3.80,23.83 L3.26,23.42 L2.81,22.97 L2.48,22.50 L2.27,22.00 L2.20,21.50 L2.27,21.00 L2.48,20.50 L2.81,20.03 L3.26,19.58 L3.80,19.17 L4.42,18.79 L5.08,18.46 L5.75,18.15 L6.42,17.88 L7.06,17.63 L7.64,17.39 L8.13,17.16 L8.54,16.91 L8.84,16.64 L9.03,16.33 L9.11,15.98 L9.09,15.58 L8.98,15.12 L8.79,14.60 L8.55,14.03 L8.28,13.40 L8.00,12.73 L7.73,12.04 L7.51,11.33 L7.34,10.63 L7.25,9.96 L7.25,9.33 L7.34,8.75 L7.55,8.26 L7.85,7.85 L8.26,7.55 L8.75,7.34 L9.33,7.25 L9.96,7.25 L10.63,7.34 L11.33,7.51 L12.04,7.73 L12.73,8.00 L13.40,8.28 L14.02,8.55 L14.60,8.79 L15.12,8.98 L15.58,9.09 L15.98,9.11 L16.33,9.03 L16.64,8.84 L16.91,8.54 L17.16,8.13 L17.39,7.64 L17.63,7.06 L17.88,6.42 L18.15,5.75 L18.46,5.08 L18.79,4.42 L19.17,3.80 L19.58,3.26 L20.03,2.81 L20.50,2.48 L21.00,2.27 L21.50,2.20 L22.00,2.27 L22.50,2.48 L22.97,2.81 L23.42,3.26 L23.83,3.80 L24.21,4.42 L24.54,5.08 L24.85,5.75 L25.12,6.42 L25.37,7.06 L25.61,7.64 L25.84,8.13 L26.09,8.54 L26.36,8.84 L26.67,9.03 L27.02,9.11 L27.42,9.09 L27.88,8.98 L28.40,8.79 L28.98,8.55 L29.60,8.28 L30.27,8.00 L30.96,7.73 L31.67,7.51 L32.37,7.34 L33.04,7.25 L33.67,7.25 L34.25,7.34 L34.74,7.55 L35.15,7.85 L35.45,8.26 L35.66,8.75 L35.75,9.33 L35.75,9.96 L35.66,10.63 L35.49,11.33 L35.27,12.04 L35.00,12.73 L34.72,13.40 L34.45,14.03 L34.21,14.60 L34.02,15.12 L33.91,15.58 L33.89,15.98 L33.97,16.33 L34.16,16.64 L34.46,16.91 L34.87,17.16 L35.36,17.39 L35.94,17.63 L36.58,17.88 L37.25,18.15 L37.92,18.46 L38.58,18.79 L39.20,19.17 L39.74,19.58 L40.19,20.03 L40.52,20.50 L40.73,21.00 L40.80,21.50Z" fill="none" stroke="#6b6b6b" stroke-width="1.7" stroke-linejoin="round"/><circle cx="21.5" cy="21.5" r="5.6" fill="none" stroke="#6b6b6b" stroke-width="1.8"/></svg>
<div class="t" style="left:731.20px;top:1163.65px;font-size:33px;line-height:33px;color:#1f2b42;letter-spacing:0.280px;-webkit-text-stroke:0.75px #1f2b42;">Oliver Kent</div>
<div class="t" style="left:730.70px;top:1207.05px;font-size:25px;line-height:25px;color:#66758f;letter-spacing:0.136px;">Designer</div>
<div class="t" style="left:1404.50px;top:1158.92px;font-size:29.5px;line-height:29.5px;color:#e0281c;">2</div>
<div class="t" style="left:723.6px;width:40px;text-align:center;top:1265.5px;font-size:25px;line-height:25px;color:#6b778c;">M</div>
<div class="t" style="left:783.7px;width:40px;text-align:center;top:1265.5px;font-size:25px;line-height:25px;color:#2f6fe4;font-weight:700;">T</div>
<div class="t" style="left:845px;width:40px;text-align:center;top:1265.5px;font-size:25px;line-height:25px;color:#6b778c;">W</div>
<div class="t" style="left:889.3px;width:40px;text-align:center;top:1265.5px;font-size:25px;line-height:25px;color:#6b778c;">T</div>
<div class="t" style="left:932.9px;width:40px;text-align:center;top:1265.5px;font-size:25px;line-height:25px;color:#6b778c;">F</div>
<div class="t" style="left:972.8px;width:40px;text-align:center;top:1265.5px;font-size:25px;line-height:25px;color:#6b778c;">S</div>
<div class="t" style="left:1008.5999999999999px;width:40px;text-align:center;top:1265.5px;font-size:25px;line-height:25px;color:#6b778c;">S</div>
<div class="t" style="left:1049px;width:40px;text-align:center;top:1265.5px;font-size:25px;line-height:25px;color:#6b778c;">M</div>
<div class="t" style="left:1092.7px;width:40px;text-align:center;top:1265.5px;font-size:25px;line-height:25px;color:#6b778c;">T</div>
<div class="t" style="left:1137.2px;width:40px;text-align:center;top:1265.5px;font-size:25px;line-height:25px;color:#6b778c;">W</div>
<div class="t" style="left:1181.5px;width:40px;text-align:center;top:1265.5px;font-size:25px;line-height:25px;color:#6b778c;">T</div>
<div class="t" style="left:1224.4px;width:40px;text-align:center;top:1265.5px;font-size:25px;line-height:25px;color:#6b778c;">F</div>
<div class="t" style="left:1264px;width:40px;text-align:center;top:1265.5px;font-size:25px;line-height:25px;color:#6b778c;">S</div>
<div class="t" style="left:1300.4px;width:40px;text-align:center;top:1265.5px;font-size:25px;line-height:25px;color:#6b778c;">S</div>
<div class="t" style="left:1353.7px;width:40px;text-align:center;top:1265.5px;font-size:25px;line-height:25px;color:#2b2b2b;font-weight:700;">Σ</div>
<div class="b" style="left:785.00px;top:1294.40px;width:35.00px;height:36.00px;background:#f0a8a0;border-radius:8px;"></div>
<div class="b" style="left:1144.80px;top:1294.40px;width:23.00px;height:36.00px;background:#8fe3b5;border-radius:8px;"></div>
<div class="b" style="left:1190.00px;top:1294.40px;width:23.00px;height:36.00px;background:#8fe3b5;border-radius:8px;"></div>
<div class="b" style="left:1233.00px;top:1294.40px;width:23.00px;height:36.00px;background:#8fe3b5;border-radius:8px;"></div>
<div class="b" style="left:1354.00px;top:1294.40px;width:39.00px;height:36.00px;background:#f4f5f7;border-radius:8px;"></div>
<div class="t" style="left:718.6px;width:50px;text-align:center;top:1298.5px;font-size:26px;line-height:26px;color:#111;-webkit-text-stroke:0.55px #111;">-</div>
<div class="t" style="left:778.7px;width:50px;text-align:center;top:1298.5px;font-size:26px;line-height:26px;color:#111;-webkit-text-stroke:0.55px #111;">10</div>
<div class="t" style="left:840px;width:50px;text-align:center;top:1298.5px;font-size:26px;line-height:26px;color:#111;-webkit-text-stroke:0.55px #111;">0</div>
<div class="t" style="left:884.3px;width:50px;text-align:center;top:1298.5px;font-size:26px;line-height:26px;color:#111;-webkit-text-stroke:0.55px #111;">0</div>
<div class="t" style="left:927.9px;width:50px;text-align:center;top:1298.5px;font-size:26px;line-height:26px;color:#111;-webkit-text-stroke:0.55px #111;">0</div>
<div class="t" style="left:967.8px;width:50px;text-align:center;top:1298.5px;font-size:26px;line-height:26px;color:#111;-webkit-text-stroke:0.55px #111;">-</div>
<div class="t" style="left:1003.5999999999999px;width:50px;text-align:center;top:1298.5px;font-size:26px;line-height:26px;color:#111;-webkit-text-stroke:0.55px #111;">-</div>
<div class="t" style="left:1044px;width:50px;text-align:center;top:1298.5px;font-size:26px;line-height:26px;color:#111;-webkit-text-stroke:0.55px #111;">0</div>
<div class="t" style="left:1087.7px;width:50px;text-align:center;top:1298.5px;font-size:26px;line-height:26px;color:#111;-webkit-text-stroke:0.55px #111;">0</div>
<div class="t" style="left:1132.2px;width:50px;text-align:center;top:1298.5px;font-size:26px;line-height:26px;color:#111;-webkit-text-stroke:0.55px #111;">8</div>
<div class="t" style="left:1176.5px;width:50px;text-align:center;top:1298.5px;font-size:26px;line-height:26px;color:#111;-webkit-text-stroke:0.55px #111;">8</div>
<div class="t" style="left:1219.4px;width:50px;text-align:center;top:1298.5px;font-size:26px;line-height:26px;color:#111;-webkit-text-stroke:0.55px #111;">8</div>
<div class="t" style="left:1259px;width:50px;text-align:center;top:1298.5px;font-size:26px;line-height:26px;color:#111;-webkit-text-stroke:0.55px #111;">-</div>
<div class="t" style="left:1295.4px;width:50px;text-align:center;top:1298.5px;font-size:26px;line-height:26px;color:#111;-webkit-text-stroke:0.55px #111;">-</div>
<div class="t" style="left:1348.7px;width:50px;text-align:center;top:1298.5px;font-size:26px;line-height:26px;color:#111;-webkit-text-stroke:0.55px #111;">34</div>
<div class="b" style="left:721.80px;top:1335.40px;width:43.00px;height:4.00px;background:#b3b3b3;border-radius:2px;"></div>
<div class="b" style="left:766.00px;top:1335.40px;width:74.80px;height:4.00px;background:#8fd3f5;border-radius:2px;"></div>
<div class="b" style="left:841.70px;top:1335.40px;width:497.30px;height:4.00px;background:#a6e6a6;border-radius:2px;"></div>
<div class="t" style="left:729.95px;top:1391.35px;font-size:33px;line-height:33px;color:#1f2b42;letter-spacing:0.473px;-webkit-text-stroke:0.75px #1f2b42;">Bob Robinson</div>
<div class="t" style="left:732.70px;top:1434.75px;font-size:25px;line-height:25px;color:#66758f;letter-spacing:0.012px;">Admin</div>
<div class="t" style="left:1405.00px;top:1385.92px;font-size:29.5px;line-height:29.5px;color:#e0281c;">3</div>
<div class="t" style="left:725px;width:40px;text-align:center;top:1492.2px;font-size:25px;line-height:25px;color:#6b778c;">M</div>
<div class="t" style="left:779px;width:40px;text-align:center;top:1492.2px;font-size:25px;line-height:25px;color:#2f6fe4;font-weight:700;">T</div>
<div class="t" style="left:834.8px;width:40px;text-align:center;top:1492.2px;font-size:25px;line-height:25px;color:#6b778c;">W</div>
<div class="t" style="left:881.8px;width:40px;text-align:center;top:1492.2px;font-size:25px;line-height:25px;color:#6b778c;">T</div>
<div class="t" style="left:929px;width:40px;text-align:center;top:1492.2px;font-size:25px;line-height:25px;color:#6b778c;">F</div>
<div class="t" style="left:971.8px;width:40px;text-align:center;top:1492.2px;font-size:25px;line-height:25px;color:#6b778c;">S</div>
<div class="t" style="left:1010.8px;width:40px;text-align:center;top:1492.2px;font-size:25px;line-height:25px;color:#6b778c;">S</div>
<div class="t" style="left:1052.8px;width:40px;text-align:center;top:1492.2px;font-size:25px;line-height:25px;color:#6b778c;">M</div>
<div class="t" style="left:1099.5px;width:40px;text-align:center;top:1492.2px;font-size:25px;line-height:25px;color:#6b778c;">T</div>
<div class="t" style="left:1147.2px;width:40px;text-align:center;top:1492.2px;font-size:25px;line-height:25px;color:#6b778c;">W</div>
<div class="t" style="left:1195.5px;width:40px;text-align:center;top:1492.2px;font-size:25px;line-height:25px;color:#6b778c;">T</div>
<div class="t" style="left:1242px;width:40px;text-align:center;top:1492.2px;font-size:25px;line-height:25px;color:#6b778c;">F</div>
<div class="t" style="left:1284.9px;width:40px;text-align:center;top:1492.2px;font-size:25px;line-height:25px;color:#6b778c;">S</div>
<div class="t" style="left:1323.8px;width:40px;text-align:center;top:1492.2px;font-size:25px;line-height:25px;color:#6b778c;">S</div>
<div class="t" style="left:1365.2px;width:40px;text-align:center;top:1492.2px;font-size:25px;line-height:25px;color:#2b2b2b;font-weight:700;">Σ</div>
<div class="b" style="left:842.10px;top:1522.00px;width:23.00px;height:36.00px;background:#8fe3b5;border-radius:8px;"></div>
<div class="b" style="left:1373.80px;top:1522.00px;width:23.00px;height:36.00px;background:#f4f5f7;border-radius:8px;"></div>
<div class="t" style="left:720px;width:50px;text-align:center;top:1526.1px;font-size:26px;line-height:26px;color:#111;-webkit-text-stroke:0.55px #111;">-</div>
<div class="t" style="left:774px;width:50px;text-align:center;top:1526.1px;font-size:26px;line-height:26px;color:#111;-webkit-text-stroke:0.55px #111;">0</div>
<div class="t" style="left:829.8px;width:50px;text-align:center;top:1526.1px;font-size:26px;line-height:26px;color:#111;-webkit-text-stroke:0.55px #111;">8</div>
<div class="t" style="left:876.8px;width:50px;text-align:center;top:1526.1px;font-size:26px;line-height:26px;color:#111;-webkit-text-stroke:0.55px #111;">0</div>
<div class="t" style="left:924px;width:50px;text-align:center;top:1526.1px;font-size:26px;line-height:26px;color:#111;-webkit-text-stroke:0.55px #111;">0</div>
<div class="t" style="left:966.8px;width:50px;text-align:center;top:1526.1px;font-size:26px;line-height:26px;color:#111;-webkit-text-stroke:0.55px #111;">-</div>
<div class="t" style="left:1005.8px;width:50px;text-align:center;top:1526.1px;font-size:26px;line-height:26px;color:#111;-webkit-text-stroke:0.55px #111;">-</div>
<div class="t" style="left:1047.8px;width:50px;text-align:center;top:1526.1px;font-size:26px;line-height:26px;color:#111;-webkit-text-stroke:0.55px #111;">0</div>
<div class="t" style="left:1094.5px;width:50px;text-align:center;top:1526.1px;font-size:26px;line-height:26px;color:#111;-webkit-text-stroke:0.55px #111;">0</div>
<div class="t" style="left:1142.2px;width:50px;text-align:center;top:1526.1px;font-size:26px;line-height:26px;color:#111;-webkit-text-stroke:0.55px #111;">0</div>
<div class="t" style="left:1190.5px;width:50px;text-align:center;top:1526.1px;font-size:26px;line-height:26px;color:#111;-webkit-text-stroke:0.55px #111;">0</div>
<div class="t" style="left:1237px;width:50px;text-align:center;top:1526.1px;font-size:26px;line-height:26px;color:#111;-webkit-text-stroke:0.55px #111;">0</div>
<div class="t" style="left:1279.9px;width:50px;text-align:center;top:1526.1px;font-size:26px;line-height:26px;color:#111;-webkit-text-stroke:0.55px #111;">-</div>
<div class="t" style="left:1318.8px;width:50px;text-align:center;top:1526.1px;font-size:26px;line-height:26px;color:#111;-webkit-text-stroke:0.55px #111;">-</div>
<div class="t" style="left:1360.2px;width:50px;text-align:center;top:1526.1px;font-size:26px;line-height:26px;color:#111;-webkit-text-stroke:0.55px #111;">8</div>
<div class="b" style="left:721.80px;top:1563.00px;width:46.10px;height:4.00px;background:#b3b3b3;border-radius:2px;"></div>
<div class="b" style="left:769.00px;top:1563.00px;width:60.00px;height:4.00px;background:#8fd3f5;border-radius:2px;"></div>
<div class="b" style="left:830.00px;top:1563.00px;width:532.80px;height:4.00px;background:#a6e6a6;border-radius:2px;"></div>
<div class="b" style="left:712.00px;top:1355.00px;width:744.00px;height:3.00px;background:#e8e8e8;"></div>
<div class="b" style="left:712.00px;top:1583.00px;width:744.00px;height:3.00px;background:#e8e8e8;"></div>
<div class="b" style="left:1456.00px;top:1052.00px;width:2.00px;height:542.00px;background:#e4e4e4;"></div>
<div class="t" style="left:1707.00px;top:1055.50px;font-size:28px;line-height:28px;color:#344563;letter-spacing:-0.203px;-webkit-text-stroke:0.65px #344563;">#4 January 27 — February 2 2025</div>
<div class="b" style="left:1613.00px;top:1089.70px;width:155.00px;height:45.00px;background:#e4effc;border-radius:9px 9px 0 0;"></div>
<div class="b" style="left:1613.00px;top:1131.00px;width:155.00px;height:463.00px;background:#e9f5fe;"></div>
<div class="b" style="left:2233.00px;top:1131.00px;width:144.00px;height:463.00px;background:#f7f8fa;"></div>
<div class="b" style="left:1610.50px;top:1131.00px;width:2.40px;height:463.00px;background:#e4e4e4;"></div>
<div class="b" style="left:1766.00px;top:1131.00px;width:2.40px;height:463.00px;background:#e4e4e4;"></div>
<div class="b" style="left:1921.60px;top:1131.00px;width:2.40px;height:463.00px;background:#e4e4e4;"></div>
<div class="b" style="left:2076.70px;top:1131.00px;width:2.40px;height:463.00px;background:#e4e4e4;"></div>
<div class="b" style="left:2231.90px;top:1131.00px;width:2.40px;height:463.00px;background:#e4e4e4;"></div>
<div class="b" style="left:2304.00px;top:1131.00px;width:2.40px;height:463.00px;background:#e4e4e4;"></div>
<div class="b" style="left:2376.20px;top:1131.00px;width:2.40px;height:463.00px;background:#e4e4e4;"></div>
<div class="b" style="left:1456.00px;top:1130.00px;width:930.00px;height:2.50px;background:#e4e4e4;"></div>
<div class="b" style="left:1456.00px;top:1355.50px;width:930.00px;height:3.00px;background:#e4e4e4;"></div>
<div class="b" style="left:1456.00px;top:1583.50px;width:930.00px;height:3.00px;background:#e4e4e4;"></div>
<div class="t" style="left:1487.10px;top:1094.84px;font-size:29.6px;line-height:29.6px;color:#344563;letter-spacing:-0.860px;-webkit-text-stroke:0.7px #344563;">Mon 27</div>
<div class="t" style="left:1648.10px;top:1094.84px;font-size:29.6px;line-height:29.6px;color:#3172e0;transform:scaleX(0.9352);transform-origin:0 0;-webkit-text-stroke:0.7px #3172e0;">Tue 28</div>
<div class="t" style="left:1798.26px;top:1094.84px;font-size:29.6px;line-height:29.6px;color:#344563;transform:scaleX(0.9437);transform-origin:0 0;-webkit-text-stroke:0.7px #344563;">Wed 29</div>
<div class="t" style="left:1956.95px;top:1094.84px;font-size:29.6px;line-height:29.6px;color:#344563;letter-spacing:-0.860px;-webkit-text-stroke:0.7px #344563;">Thu 30</div>
<div class="t" style="left:2121.01px;top:1094.84px;font-size:29.6px;line-height:29.6px;color:#344563;transform:scaleX(0.9147);transform-origin:0 0;-webkit-text-stroke:0.7px #344563;">Fri 31</div>
<div class="t" style="left:2260.75px;top:1094.84px;font-size:29.6px;line-height:29.6px;color:#344563;-webkit-text-stroke:0.7px #344563;">1</div>
<div class="t" style="left:2332.50px;top:1094.84px;font-size:29.6px;line-height:29.6px;color:#344563;-webkit-text-stroke:0.7px #344563;">2</div>
<div class="b" style="left:1462.50px;top:1133.90px;width:299.00px;height:105.50px;background:#ecd3ef;border-radius:9px;"></div>
<div class="b" style="left:1472.50px;top:1141.60px;width:46.50px;height:28.00px;background:#f6f1f6;border-radius:4px;"></div>
<div class="t" style="left:1475.14px;top:1143.40px;font-size:26px;line-height:26px;color:#e5534b;transform:scaleX(0.9308);transform-origin:0 0;-webkit-text-stroke:0.45px #e5534b;">10h</div>
<svg class="b" style="left:1527.00px;top:1142.50px;opacity:1;" width="28.00" height="28.00" viewBox="0 0 28 28"><rect x="0" y="0" width="28" height="28" rx="4" fill="#78a9e6"/><path d="M7.6 14.6l4.8 4.8 8.4-9.2" fill="none" stroke="#fff" stroke-width="3.2" stroke-linecap="round" stroke-linejoin="round"/></svg>
<div class="b" style="left:1602.40px;top:1140.20px;width:151.00px;height:32.80px;background:#f6f4f6;border:2px solid #b3b3b3;border-radius:5px;box-sizing:border-box;"></div>
<div class="t" style="left:1607.25px;top:1143.90px;font-size:26px;line-height:26px;color:#172b4d;transform:scaleX(0.7786);transform-origin:0 0;">IN PROGRESS</div>
<div class="t" style="left:1472.00px;top:1171.95px;font-size:29px;line-height:29px;color:#2b2b2b;letter-spacing:-0.700px;">[BA-1]</div>
<div class="t" style="left:1473.30px;top:1202.55px;font-size:29px;line-height:29px;color:#2b2b2b;transform:scaleX(0.9281);transform-origin:0 0;">Test Assignment</div>
<svg class="b" style="left:1456.00px;top:1162.00px;" width="104.00" height="46.00" viewBox="0 0 104 46"><ellipse cx="51" cy="23" rx="45.5" ry="17.5" fill="none" stroke="#3573ea" stroke-width="5"/></svg>
<div class="b" style="left:1928.40px;top:1133.90px;width:144.40px;height:74.80px;background:#ecd3ef;border-radius:9px;"></div>
<svg class="b" style="left:1938.00px;top:1140.00px;" width="32.00" height="32.00" viewBox="0 0 32 32"><rect x="1.5" y="1.5" width="29" height="29" rx="5" fill="none" stroke="#c2c4d6" stroke-width="3"/><path d="M4 14L14 4M4 24L24 4M8 30L30 8M18 30L30 18" stroke="#c2c4d6" stroke-width="3"/></svg>
<svg class="b" style="left:1976.00px;top:1141.00px;" width="30.00" height="30.00" viewBox="0 0 30 30"><path d="M15 1.5l3.2 2.6 4-.6 1.5 3.8 3.8 1.5-.6 4 2.6 3.2-2.6 3.2.6 4-3.8 1.5-1.5 3.8-4-.6L15 28.5l-3.2-2.6-4 .6-1.5-3.8-3.8-1.5.6-4L.5 15l2.6-3.2-.6-4 3.8-1.5 1.5-3.8 4 .6z" fill="#c2c4d6"/><path d="M9.5 15.5l4 4 7.5-8" fill="none" stroke="#f4eef6" stroke-width="2.6" stroke-linecap="round" stroke-linejoin="round"/></svg>
<div class="t" style="left:2013.95px;top:1141.75px;font-size:29px;line-height:29px;color:#172b4d;transform:scaleX(0.9103);transform-origin:0 0;">BA</div>
<div class="b" style="left:2059.00px;top:1144.00px;width:1.60px;height:28.00px;background:#172b4d;"></div>
<div class="b" style="left:1928.4px;top:1133.9px;width:144.4px;height:74.8px;overflow:hidden;"><div class="t" style="left:7.97px;top:38.05px;font-size:29px;line-height:29px;color:#172b4d;transform:scaleX(0.9037);transform-origin:0 0;">Placeholder</div></div>
<svg class="b" style="left:1998.00px;top:1131.00px;" width="70.00" height="50.00" viewBox="0 0 70 50"><ellipse cx="35" cy="25" rx="30.5" ry="19.5" fill="none" stroke="#3573ea" stroke-width="5"/></svg>
<div class="b" style="left:1772.40px;top:1363.50px;width:144.60px;height:106.00px;background:#ecd3ef;border-radius:9px;"></div>
<div class="b" style="left:1781.90px;top:1370.70px;width:83.40px;height:28.00px;background:#f6f1f6;border-radius:4px;"></div>
<div class="t" style="left:1786.00px;top:1372.40px;font-size:26px;line-height:26px;color:#3b8c2b;letter-spacing:-0.900px;-webkit-text-stroke:0.45px #3b8c2b;">8h/day</div>
<svg class="b" style="left:1873.00px;top:1369.00px;" width="32.00" height="32.00" viewBox="0 0 32 32"><rect x="1.5" y="1.5" width="29" height="29" rx="5" fill="#faf4fa" stroke="#e88a84" stroke-width="3"/><rect x="1.5" y="1.5" width="29" height="6" rx="3" fill="#e88a84"/><path d="M8 14.5h15M8 20.5h8" stroke="#8f8a96" stroke-width="3" stroke-linecap="round"/></svg>
<svg class="b" style="left:1782.00px;top:1403.00px;" width="30.00" height="30.00" viewBox="0 0 30 30"><path d="M15 1.5l3.2 2.6 4-.6 1.5 3.8 3.8 1.5-.6 4 2.6 3.2-2.6 3.2.6 4-3.8 1.5-1.5 3.8-4-.6L15 28.5l-3.2-2.6-4 .6-1.5-3.8-3.8-1.5.6-4L.5 15l2.6-3.2-.6-4 3.8-1.5 1.5-3.8 4 .6z" fill="#c2c4d6"/><path d="M9.5 15.5l4 4 7.5-8" fill="none" stroke="#f4eef6" stroke-width="2.6" stroke-linecap="round" stroke-linejoin="round"/></svg>
<div class="t" style="left:1818.95px;top:1402.35px;font-size:29px;line-height:29px;color:#172b4d;transform:scaleX(0.9103);transform-origin:0 0;">BA</div>
<div class="b" style="left:1865.00px;top:1405.00px;width:1.60px;height:28.00px;background:#172b4d;"></div>
<div class="t" style="left:1781.63px;top:1432.65px;font-size:29px;line-height:29px;color:#172b4d;transform:scaleX(0.9221);transform-origin:0 0;">Booking</div>
<svg class="b" style="left:1806.00px;top:1394.00px;" width="70.00" height="50.00" viewBox="0 0 70 50"><ellipse cx="35" cy="24.5" rx="28" ry="17.5" fill="none" stroke="#3573ea" stroke-width="5"/></svg>
<div class="b" style="left:1616.00px;top:1590.00px;width:770.00px;height:4.00px;background:#dff3d8;"></div>
<svg class="b" style="left:1614.00px;top:1586.00px;" width="10.00" height="8.00" viewBox="0 0 10 8"><path d="M1 1l7 6H1z" fill="#6b9ae8"/></svg>
</body></html>
